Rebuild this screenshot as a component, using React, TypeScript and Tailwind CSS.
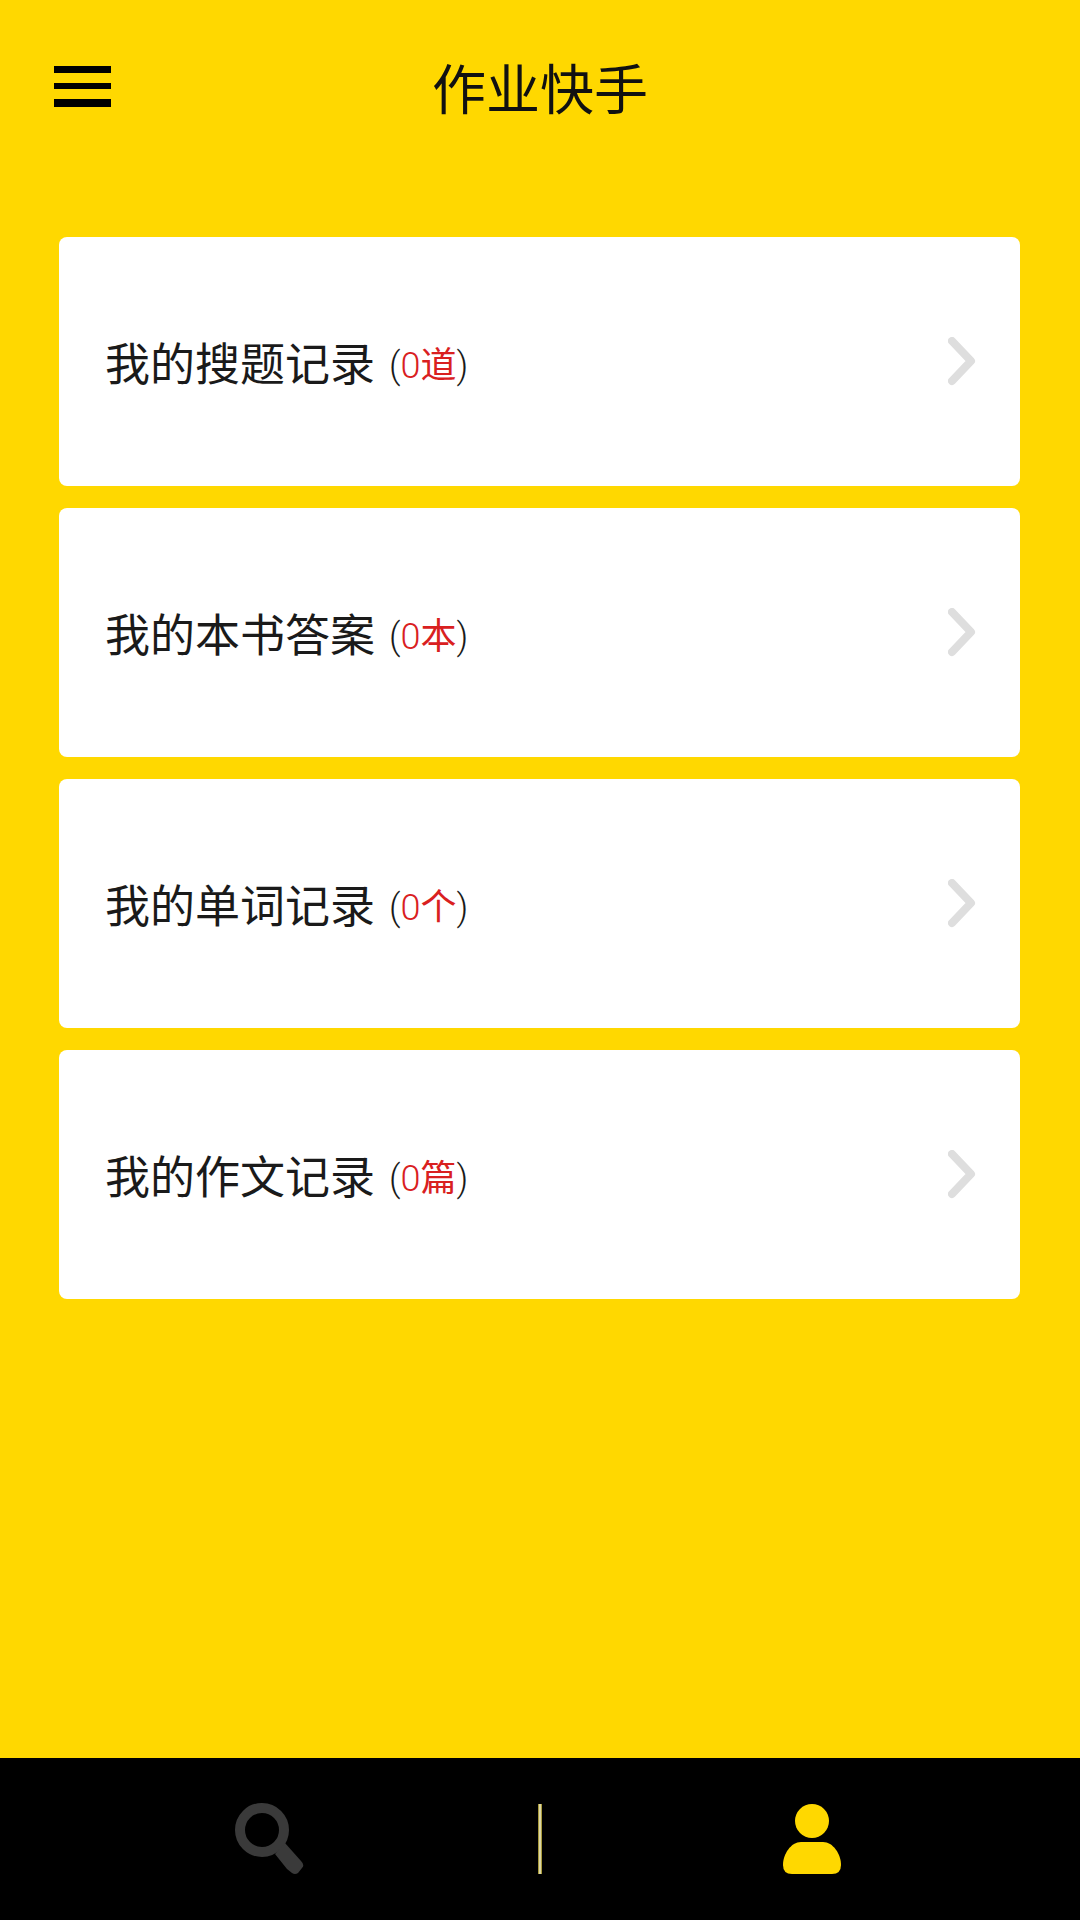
// ── Record data ────────────────────────────────────────────────────────────

const RECORDS = [
  { id: "questions", label: "我的搜题记录", count: 0, unit: "道" },
  { id: "books", label: "我的本书答案", count: 0, unit: "本" },
  { id: "words", label: "我的单词记录", count: 0, unit: "个" },
  { id: "essays", label: "我的作文记录", count: 0, unit: "篇" },
];

// ── Icons ──────────────────────────────────────────────────────────────────

function MenuIcon() {
  return (
    <svg width="57" height="42" viewBox="0 0 57 42" fill="#000" aria-hidden="true">
      <rect x="0" y="0" width="57" height="7" />
      <rect x="0" y="17" width="57" height="6" />
      <rect x="0" y="33" width="57" height="8" />
    </svg>
  );
}

function ChevronIcon() {
  return (
    <svg
      width="28"
      height="50"
      viewBox="0 0 28 50"
      fill="none"
      stroke="#dedede"
      strokeWidth="8"
      strokeLinecap="round"
      strokeLinejoin="round"
      aria-hidden="true"
    >
      <path d="M4 4 23 24 4 44" />
    </svg>
  );
}

function SearchIcon() {
  return (
    <svg width="70" height="74" viewBox="0 0 70 74" aria-hidden="true">
      <circle cx="28" cy="28" r="22" fill="none" stroke="#3a3a3a" strokeWidth="10" />
      <path
        d="M51 41 67 59Q71 63 68 66L64 71Q61 73 58 71L53 67 41 52Z"
        fill="#3a3a3a"
      />
    </svg>
  );
}

function UserIcon() {
  return (
    <svg width="60" height="72" viewBox="0 0 60 72" fill="#ffd800" aria-hidden="true">
      <circle cx="31" cy="18" r="17" />
      <path d="M20 39H42C52 39 60 51 60 62Q60 71 51 71H11Q2 71 2 62C2 51 10 39 20 39Z" />
    </svg>
  );
}

// ── Single record row ──────────────────────────────────────────────────────

function RecordCard({ record }: { record: (typeof RECORDS)[number] }) {
  return (
    <li>
      <a
        href={`#${record.id}`}
        className="flex h-[249px] items-center justify-between rounded-lg bg-white pr-11 pl-[46px]"
      >
        <span className="flex items-end gap-3.5 leading-none text-[#1a1a1a]">
          <span className="text-[45px]">{record.label}</span>
          <span className="font-['Roboto','Noto_Sans_CJK_SC',sans-serif] text-[36px] font-light">
            (
            <span className="text-[#d9201f]">
              {record.count}
              <span className="font-normal">{record.unit}</span>
            </span>
            )
          </span>
        </span>
        <ChevronIcon />
      </a>
    </li>
  );
}

// ── Page ───────────────────────────────────────────────────────────────────

export default function App() {
  return (
    <div className="flex min-h-screen flex-col bg-[#ffd800] font-['Noto_Sans_CJK_SC',sans-serif]">
      <header className="grid h-[173px] grid-cols-[1fr_auto_1fr] items-center px-[54px]">
        <button type="button" aria-label="菜单" className="justify-self-start">
          <MenuIcon />
        </button>
        <h1 className="text-[54px] leading-none text-[#111]">作业快手</h1>
      </header>

      <main className="flex-1 pt-16 pr-[60px] pb-10 pl-[59px]">
        <ul className="flex flex-col gap-[22px]">
          {RECORDS.map((record) => (
            <RecordCard key={record.id} record={record} />
          ))}
        </ul>
      </main>

      <nav className="flex h-[162px] items-center bg-black">
        <a href="#search" aria-label="搜索" className="flex flex-1 justify-center">
          <SearchIcon />
        </a>
        <span className="h-[70px] w-1 border-x border-[#a89a3c] bg-[#dcd6a4]" />
        <a href="#me" aria-label="我的" aria-current="page" className="flex flex-1 justify-center">
          <UserIcon />
        </a>
      </nav>
    </div>
  );
}
